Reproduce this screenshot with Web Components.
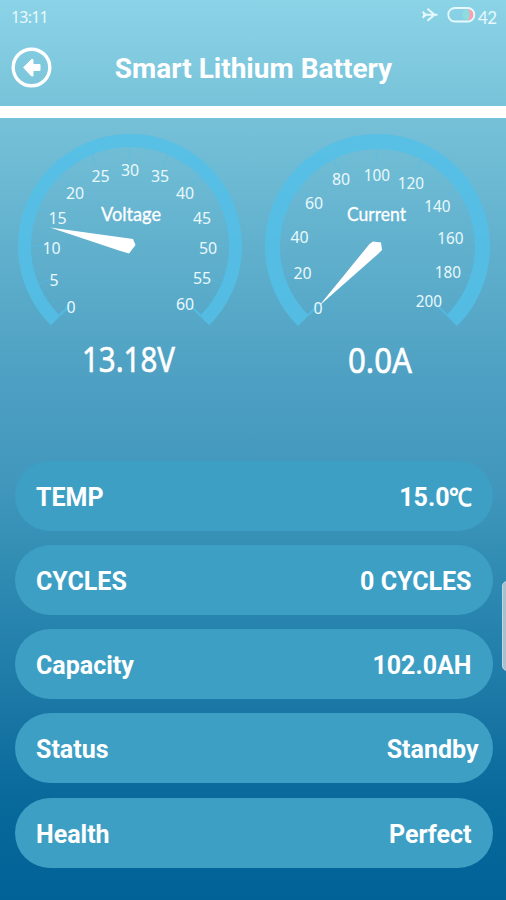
<!DOCTYPE html>
<html lang="en">
<head>
<meta charset="utf-8">
<title>Smart Lithium Battery</title>
<style>
    body {
        margin: 0;
    }
</style>
</head>
<body>
<battery-app></battery-app>

<script>
const define = (name, html, setup) => {
    const template = document.createElement('template');
    template.innerHTML = html;
    customElements.define(name, class extends HTMLElement {
        constructor() {
            super();
            this.attachShadow({ mode: 'open' });
            this.shadowRoot.appendChild(template.content.cloneNode(true));
        }
        connectedCallback() {
            if (setup) setup(this, this.shadowRoot);
        }
    });
};

define('status-bar', `
    <style>
        :host {
            display: flex;
            justify-content: space-between;
            height: 36px;
            box-sizing: border-box;
            padding: 0 5px 0 11px;
            color: #e6f9fd;
            font: 17px/35px "Noto Sans", sans-serif;
        }
        .right {
            display: flex;
            gap: 1px;
        }
        .clock {
            font-size: 16px;
            letter-spacing: -.8px;
        }
        .level {
            font-family: Lato, sans-serif;
            width: 23px;
            letter-spacing: -.5px;
        }
        svg {
            display: block;
        }
    </style>
    <span class="clock">13:11</span>
    <div class="right">
        <svg width="58" height="36" fill="none" stroke="#e6f9fd">
            <path d="M4 14.800h14.500M8.500 8.800l7 6-7 6M3.500 11.800l3.500 3-3.500 3" stroke-width="2" stroke-linejoin="round"/>
            <circle cx="49" cy="14.500" r="5.500" fill="#8edce0" stroke="none"/>
            <path d="M49 9h1.500q4 1 4 5.500t-4 5.500h-1.500q3.500-5.500 0-11z" fill="#ff9fac" stroke="none"/>
            <rect x="29.300" y="8" width="26" height="13.500" rx="6.500" stroke-width="1.800"/>
        </svg>
        <span class="level">42</span>
    </div>
`);

define('title-bar', `
    <style>
        :host {
            display: grid;
            grid-template-columns: 60px 1fr 60px;
            align-items: center;
            height: 82px;
            box-sizing: border-box;
            padding: 0 0 20px 0;
            border-bottom: 12px solid #fff;
            color: #fff;
        }
        h1 {
            margin: 13px 0 0 1px;
            text-align: center;
            font: bold 28px/36px Roboto, sans-serif;
            white-space: nowrap;
        }
        svg {
            display: block;
            margin: 11px 0 0 11px;
        }
    </style>
    <svg width="42" height="42" viewBox="0 0 42 42">
        <circle cx="20.500" cy="20.500" r="18.300" fill="none" stroke="#fff" stroke-width="3.400"/>
        <path d="M12.500 20.500l8-8h1.500v5h7v6h-7v5.500h-1.500z" fill="#fff" stroke="#fff" stroke-linejoin="round"/>
    </svg>
    <h1><slot></slot></h1>
`);

// Dial layouts. Coordinates are local to a 253x282 tile.
const dials = {
    voltage: {
        cx: 130, cy: 128, r: 105.5, band: 13, divisions: 60, major: 5,
        caption: ['Voltage', 131, 102.5, 60], value: ['13.18V', 128.5, 253.5, 93],
        needle: 'M50 109.500L133 121L135.500 127L129 135.500L119 132.500Z',
        labels: [
            [0, 71, 189], [5, 54, 162], [10, 51.5, 130], [15, 57.5, 100.5], [20, 75, 75.5],
            [25, 100.5, 58.5], [30, 130, 52.5], [35, 160, 58.5], [40, 185, 75.5],
            [45, 202, 100], [50, 208, 130], [55, 202, 160], [60, 185, 186]
        ]
    },
    current: {
        cx: 124.5, cy: 128.5, r: 105, band: 15, divisions: 50, major: 5,
        caption: ['Current', 123.5, 102.5, 59], value: ['0.0A', 127, 254.5, 64],
        needle: 'M66 188L116.500 126L120 123.500L128 124.500L129 132L125 136Z',
        labels: [
            [0, 65, 190], [20, 49.5, 155], [40, 46.5, 119.5], [60, 61, 85.5], [80, 88, 61.5],
            [100, 124, 57], [120, 158, 65.5], [140, 184.500, 88], [160, 197.5, 120],
            [180, 195, 154.5], [200, 176, 183.5]
        ]
    }
};

define('dial-gauge', `
    <style>
        :host {
            display: block;
            width: 253px;
            height: 282px;
        }
        svg {
            display: block;
            fill: #fff;
            text-anchor: middle;
            font-family: "Noto Sans", sans-serif;
        }
        .ring, .ticks {
            fill: none;
            stroke: #53bfe8;
        }
        .labels {
            font-size: 16.500px;
            fill: #e9f9fc;
        }
        .caption {
            font-family: Lato, sans-serif;
            font-size: 19px;
            stroke: #fff;
            stroke-width: .3px;
        }
        .value {
            font-size: 35px;
            stroke: #fff;
            stroke-width: .6px;
        }
    </style>
    <svg width="253" height="282"></svg>
`, (host, root) => {
    const d = dials[host.getAttribute('type')];
    const point = (angle, radius) => {
        const a = angle * Math.PI / 180;
        return (d.cx + radius * Math.cos(a)).toFixed(1) + ' ' + (d.cy + radius * Math.sin(a)).toFixed(1);
    };
    // the scale sweeps 270 degrees, open at the bottom
    let ticks = '', majors = '';
    const inner = d.r - d.band / 2;
    for (let i = 0; i <= d.divisions; i++) {
        const angle = 135 + 270 * i / d.divisions;
        if (i % d.major) ticks += `M${point(angle, inner)}L${point(angle, inner - 5)}`;
        else majors += `M${point(angle, inner)}L${point(angle, inner - 12)}`;
    }
    const text = (cls, [str, x, y, w]) =>
        `<text class="${cls}" x="${x}" y="${y}" textLength="${w}" lengthAdjust="spacingAndGlyphs">${str}</text>`;
    root.querySelector('svg').innerHTML = `
        <path class="ring" stroke-width="${d.band}" stroke-opacity=".85" d="M${point(135, d.r)}A${d.r} ${d.r} 0 1 1 ${point(45, d.r)}"/>
        <path class="ticks" stroke-opacity=".22" d="${ticks}"/>
        <path class="ticks" stroke-opacity=".4" stroke-width="1.5" d="${majors}"/>
        <path class="ticks" stroke-opacity=".8" stroke-width="1.5" d="M${point(135.5, inner)}L${point(135.5, inner - 15)}M${point(44.5, inner)}L${point(44.5, inner - 15)}"/>
        <g class="labels">${d.labels.map(([n, x, y]) =>
            text('', [n, x, y + 5.5, String(n).length * 9.1 - (n > 99 ? 1 : 0)])).join('')}</g>
        ${text('caption', d.caption)}
        <path d="${d.needle}"/>
        ${text('value', d.value)}`;
});

define('info-row', `
    <style>
        :host {
            display: flex;
            justify-content: space-between;
            align-items: center;
            height: 70px;
            box-sizing: border-box;
            padding: 4px 21px 0 21.500px;
            border-radius: 35px;
            background: #3e9fc4;
            color: #fff;
            font: bold 25px/30px Roboto, sans-serif;
            white-space: nowrap;
        }
        :host([wide]) {
            padding-right: 14px;
        }
    </style>
    <slot name="label"></slot>
    <slot></slot>
`);

define('battery-app', `
    <style>
        :host {
            display: flex;
            flex-direction: column;
            position: relative;
            width: 506px;
            height: 900px;
            overflow: hidden;
            background: linear-gradient(#8bd3e7 0, #76c1d8 118px, #60b0cd 250px, #4c9fc2 390px,
                #4297bd 480px, #3690b5 540px, #2784ae 622px, #1b77a5 705px, #08699b 800px, #006297 900px);
        }
        .dials {
            display: flex;
        }
        .rows {
            display: flex;
            flex-direction: column;
            gap: 14.300px;
            padding: 60.500px 13.500px 0 14.500px;
        }
        .unit {
            display: inline-block;
            margin-left: -3px;
            transform: scaleX(.92);
            transform-origin: right;
        }
        .handle {
            position: absolute;
            right: -6px;
            top: 581px;
            width: 10px;
            height: 90px;
            box-sizing: border-box;
            border: 1px solid #c5d5dc;
            border-radius: 5px;
            background: #a5c1cd;
        }
    </style>
    <status-bar></status-bar>
    <title-bar>Smart Lithium Battery</title-bar>
    <div class="dials">
        <dial-gauge type="voltage"></dial-gauge>
        <dial-gauge type="current"></dial-gauge>
    </div>
    <div class="rows">
        <info-row><span slot="label">TEMP</span><span>15.0<span class="unit">℃</span></span></info-row>
        <info-row><span slot="label">CYCLES</span>0 CYCLES</info-row>
        <info-row><span slot="label">Capacity</span>102.0AH</info-row>
        <info-row wide><span slot="label">Status</span>Standby</info-row>
        <info-row><span slot="label">Health</span>Perfect</info-row>
    </div>
    <div class="handle"></div>
`);
</script>
</body>
</html>
